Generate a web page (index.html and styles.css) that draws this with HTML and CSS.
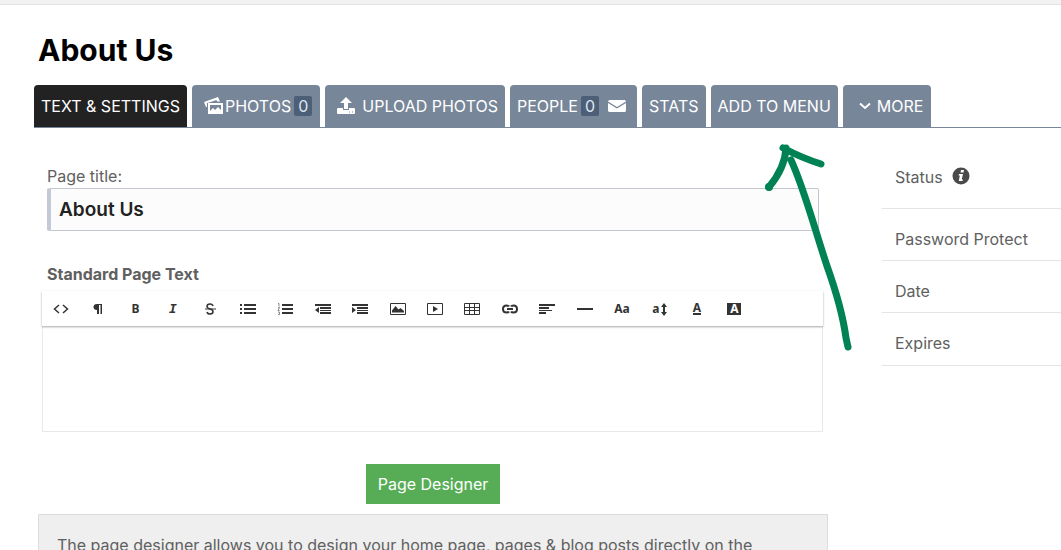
FILE: index.html
```html
<!DOCTYPE html>
<html lang="en">
<head>
<meta charset="utf-8">
<title>About Us</title>
<link rel="stylesheet" href="styles.css">
</head>
<body>
<div class="page">
  <div class="topbar"></div>
  <h1 class="heading">About Us</h1>
  <nav class="tabs">
    <a class="tab active" href="#">TEXT &amp; SETTINGS</a>
    <a class="tab photos" href="#"><svg width="20" height="18" viewBox="0 0 20 18"><path fill="#fff" d="M0 5 14 0l2 4.500H13l-.5-1.500L5 5.500 3 6v4L2 10z"/><path fill="#fff" fill-rule="evenodd" d="M4 6h15v11H4zM6 8v6l3-3 2 2 3-3 3 3V8z"/></svg><span>PHOTOS</span><span class="count">0</span></a>
    <a class="tab upload" href="#"><svg width="18" height="18" viewBox="0 0 18 18"><path fill="#fff" d="M9 0l6 6h-4v6H7V6H3z"/><path fill="#fff" fill-rule="evenodd" d="M1 11h5v2h6v-2h5q1 0 1 1v4q0 1-1 1H1q-1 0-1-1v-4q0-1 1-1zM12 14.500h1v1h-1zM15 14.500h1v1h-1z"/></svg><span>UPLOAD PHOTOS</span></a>
    <a class="tab people" href="#"><span>PEOPLE</span><span class="count">0</span><svg class="mail" width="18" height="12" viewBox="0 0 18 12"><path fill="#fff" d="M1 0h16l1 1.500L9 7 0 1.500zM0 3l9 5.500L18 3v8l-1 1H1l-1-1z"/></svg></a>
    <a class="tab" href="#">STATS</a>
    <a class="tab" href="#">ADD TO MENU</a>
    <a class="tab more" href="#"><svg width="12" height="8" viewBox="0 0 12 8"><path d="M1 1.500l5 4.500 5-4.500" fill="none" stroke="#fff" stroke-width="2"/></svg><span>MORE</span></a>
  </nav>
  <div class="columns">
    <main class="main">
      <div class="field">
        <label for="title">Page title:</label>
        <input id="title" type="text" value="About Us">
      </div>
      <label class="section-label" for="body-text">Standard Page Text</label>
      <div class="editor">
        <div class="toolbar">
          <button type="button" aria-label="HTML"><svg viewBox="0 0 16 16"><path class="line" d="M6 4 1.500 8 6 12M10 4l4.500 4-4.500 4"/></svg></button>
          <button type="button" aria-label="Format"><svg viewBox="0 0 16 16"><path d="M7 3h5v10h-1.500V4H9v9H7V9Q3.500 9 3.500 6T7 3z"/></svg></button>
          <button type="button" class="glyph">B</button>
          <button type="button" class="glyph italic">I</button>
          <button type="button" aria-label="Strikethrough"><svg viewBox="0 0 16 16"><path class="line" d="M11 5Q10.500 3 8 3 5 3 5 5.500 5 7 8 8q3 .8 3 2.500 0 2.500-3 2.500-2.500 0-3-2"/><path d="M3 7.500h11v1H3z"/></svg></button>
          <button type="button" aria-label="Bulleted list"><svg viewBox="0 0 16 16"><path d="M0 3h2v2H0zM0 7h2v2H0zM0 11h2v2H0zM4 3h12v2H4zM4 7h12v2H4zM4 11h12v2H4z"/></svg></button>
          <button type="button" aria-label="Numbered list"><svg viewBox="0 0 16 16"><path d="M5 3h11v2H5zM5 7h11v2H5zM5 11h11v2H5z"/><path class="faint" d="M1 2.500h1v3M1 6.500h1.500L1 9.500h1.500M1 11h1.500v2.500H1"/></svg></button>
          <button type="button" aria-label="Outdent"><svg viewBox="0 0 16 16"><path d="M0 3h16v2H0zM5 6h11v2H5zM5 9h11v1H5zM5 11h11v2H5zM4 6v6L0 9z"/></svg></button>
          <button type="button" aria-label="Indent"><svg viewBox="0 0 16 16"><path d="M0 3h16v2H0zM5 6h11v2H5zM5 9h11v1H5zM5 11h11v2H5zM0 6v6l4-3z"/></svg></button>
          <button type="button" aria-label="Image"><svg viewBox="0 0 16 16"><path class="thin" d="M.5 2.500h15v11H.5z"/><path d="M2 11.500V9.500l3.500-4.500 3 3.500 2-1.500 3.500 3v1.500z"/></svg></button>
          <button type="button" aria-label="Video"><svg viewBox="0 0 16 16"><path class="thin" d="M.5 2.500h15v11H.5z"/><path d="M6 5v6l5-3z"/></svg></button>
          <button type="button" aria-label="Table"><svg viewBox="0 0 16 16"><path class="thin" d="M.5 2.500h15v11H.5zM.5 6.500h15M.5 9.500h15M5.500 2.500v11M10.500 2.500v11"/></svg></button>
          <button type="button" aria-label="Link"><svg viewBox="0 0 16 16"><path class="bold" d="M7 5.500Q6.500 4.500 4.500 4.500 1 4.500 1 8t3.500 3.500q2 0 2.500-1M9 5.500q.5-1 2.500-1Q15 4.500 15 8t-3.500 3.500q-2 0-2.500-1M5 8h6"/></svg></button>
          <button type="button" aria-label="Align"><svg viewBox="0 0 16 16"><path d="M0 3h16v2H0zM0 6h10v2H0zM0 9h13v1H0zM0 11h7v2H0z"/></svg></button>
          <button type="button" aria-label="Line"><svg viewBox="0 0 16 16"><path d="M0 7h16v2H0z"/></svg></button>
          <button type="button" class="glyph">Aa</button>
          <button type="button" class="glyph size"><span>a</span><svg class="updown" viewBox="0 0 6 16"><path d="M3 2l3 4H4v5h2l-3 4-3-4h2V6H0z"/></svg></button>
          <button type="button" class="glyph"><span class="underlined">A</span></button>
          <button type="button" class="glyph"><span class="inverse">A</span></button>
        </div>
        <textarea id="body-text"></textarea>
      </div>
      <button type="button" class="designer">Page Designer</button>
      <p class="notice">The page designer allows you to design your home page, pages &amp; blog posts directly on the</p>
    </main>
    <aside class="sidebar">
      <div class="row status">Status <svg width="18" height="18" viewBox="0 0 18 18"><circle cx="9" cy="9" r="8.500" fill="#4a4a4a"/><path fill="#fff" d="M9 3h3l-.5 2.500h-3zM7 7h4l-1.300 5.500H11L10.500 14H6.800l1-5.500H6.500z"/></svg></div>
      <div class="row">Password Protect</div>
      <div class="row">Date</div>
      <div class="row last">Expires</div>
    </aside>
  </div>
  <svg class="arrow" width="100" height="220" viewBox="0 0 100 220"><path d="M88 207L86 198Q82 168 67 126C54 87 44 48 31 20M9 47Q25 28 26 8M23 8Q42 18 61 24"/><circle cx="9" cy="47" r="4"/></svg>
</div>
</body>
</html>
```
FILE: styles.css
```css
* { box-sizing: border-box; }
body {
  margin: 0;
  background: #fff;
  color: #606060;
  font: 16px/20px Inter, "Liberation Sans", sans-serif;
}
button, input, textarea { font: inherit; margin: 0; }
.page {
  position: relative;
  height: 100vh;
  overflow: hidden;
}
.topbar {
  height: 5px;
  background: #f2f2f2;
  border-bottom: 1px solid #e2e2e2;
}
.heading {
  margin: 27px 38px 17px;
  color: #000;
  font-size: 30px;
  line-height: 36px;
  font-weight: 700;
}
.tabs {
  position: relative;
  display: flex;
  gap: 5px;
  margin-left: 34px;
}
.tabs::after {
  content: "";
  position: absolute;
  left: 0;
  right: 0;
  bottom: 0;
  height: 1px;
  background: #778699;
}
.tab {
  display: flex;
  align-items: center;
  height: 43px;
  padding: 0 7px 2px;
  border-radius: 4px 4px 0 0;
  background: #778699;
  color: #fff;
  text-decoration: none;
  white-space: nowrap;
}
.tab.active { background: #222; }
.photos { padding-left: 12px; padding-right: 8px; }
.photos svg { margin-right: 1px; }
.upload { padding-left: 12px; }
.upload svg { margin-right: 7px; }
.people { padding-left: 7px; padding-right: 11px; }
.more { gap: 6px; padding-left: 16px; padding-right: 8px; }
.count {
  margin-left: 3px;
  padding: 0 4px;
  border-radius: 2px;
  background: #4d5f77;
  color: #dce6f2;
}
.mail { margin-left: 9px; }
.columns {
  display: flex;
  gap: 54px;
  padding-left: 38px;
}
.main {
  flex: 1;
  min-width: 0;
  padding-top: 38px;
}
.field { padding: 0 9px; }
.field label, .section-label { display: block; }
.field label { margin-bottom: 2px; }
.field input {
  display: block;
  width: 100%;
  height: 43px;
  padding: 0 8px;
  border: 1px solid #c3c7cf;
  border-left: 4px solid #c3cad5;
  border-radius: 2px;
  background: #fcfcfc;
  color: #222;
  font-size: 19px;
  font-weight: 600;
}
.section-label {
  margin: 33px 9px 7px;
  font-weight: 700;
}
.editor { margin: 0 5px 0 4px; }
.toolbar {
  position: relative;
  display: flex;
  height: 35px;
  padding-right: 70px;
  background: #fff;
  box-shadow: 0 1px 2px rgba(0, 0, 0, 0.35);
}
.toolbar button {
  flex: 1;
  display: flex;
  align-items: center;
  justify-content: center;
  min-width: 0;
  padding: 0;
  border: 0;
  background: none;
  color: #333;
}
.toolbar svg {
  width: 16px;
  height: 16px;
  fill: #333;
}
.toolbar path.line { fill: none; stroke: #333; stroke-width: 1.5; }
.toolbar path.bold { fill: none; stroke: #333; stroke-width: 2; }
.toolbar path.thin { fill: none; stroke: #333; stroke-width: 1; }
.toolbar path.faint { fill: none; stroke: #888; stroke-width: 1; }
.toolbar .glyph {
  font: bold 12px/12px "Noto Sans", sans-serif;
}
.toolbar .italic { font: italic bold 13px/13px "DejaVu Sans Mono", monospace; }
.toolbar .updown { width: 6px; }
.size { gap: 1px; }
.underlined { border-bottom: 2px solid #333; line-height: 11px; }
.inverse { padding: 0 3px; background: #333; color: #fff; }
.editor textarea {
  display: block;
  width: 100%;
  height: 106px;
  border: 1px solid #e8e8e8;
  border-top: 0;
  resize: none;
  background: #fff;
}
.designer {
  display: block;
  height: 40px;
  margin: 32px auto 10px;
  padding: 0 12px;
  border: 0;
  background: #56ad56;
  color: #fff;
}
.notice {
  margin: 0;
  padding: 20px 18px;
  border: 1px solid #ddd;
  background: #efefef;
}
.sidebar { flex: 0 0 179px; }
.row {
  height: 52px;
  padding: 20px 13px 0;
  border-bottom: 1px solid #e4e4e4;
}
.row.last { height: 53px; }
.status {
  display: flex;
  gap: 9px;
  height: 81px;
  padding-top: 39px;
}
.arrow {
  position: absolute;
  left: 760px;
  top: 140px;
  fill: #008254;
}
.arrow path {
  fill: none;
  stroke: #008254;
  stroke-width: 7;
  stroke-linecap: round;
}
```
